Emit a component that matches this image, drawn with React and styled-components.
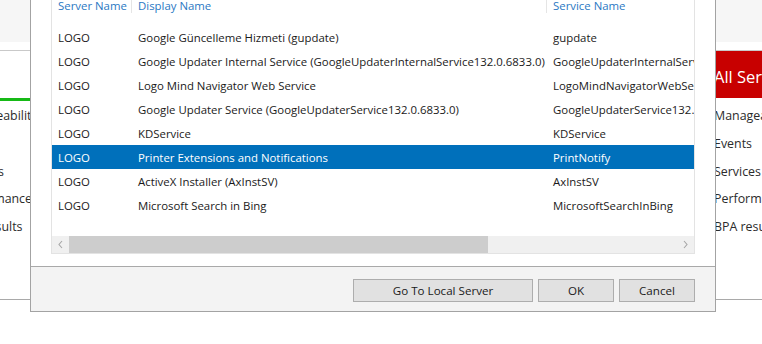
import React from "react";
import styled, { createGlobalStyle } from "styled-components";

const GlobalStyle = createGlobalStyle`
  html, body {
    margin: 0;
    padding: 0;
    background: #ffffff;
    overflow: hidden;
  }
  body {
    font-family: "Segoe UI", "Open Sans", "Noto Sans", sans-serif;
  }
`;

const Page = styled.div`
  position: relative;
  width: 762px;
  height: 344px;
  overflow: hidden;
  background: #ffffff;
`;

const TopStrip = styled.div`
  height: 42px;
  background: #f6f6f6;
`;

const TileRow = styled.div`
  display: flex;
  gap: 437px;
  margin-top: 8px;
  margin-left: -52px;
`;

const Tile = styled.div`
  width: 320px;
  flex-shrink: 0;
  height: 248px;
  border-top: 1px solid #c9c9c9;
  border-bottom: 1px solid #a9a9a9;
  background: #ffffff;
  display: flex;
  flex-direction: column;
`;

const TileHeader = styled.div`
  height: ${(p) => (p.$danger ? "47px" : "48px")};
  flex-shrink: 0;
  background: ${(p) => (p.$danger ? "#c80000" : "#ffffff")};
  border-bottom: 3px solid ${(p) => (p.$danger ? "#ffffff" : "#16b916")};
  color: #ffffff;
  font-size: 16.5px;
  display: flex;
  align-items: center;
  padding: 3px 0 0 9px;
  box-sizing: border-box;
  height: 50px;
`;

const TileItems = styled.div`
  display: flex;
  flex-direction: column;
  padding: 1px 0 0 9px;
`;

const TileItem = styled.div`
  height: 27.8px;
  line-height: 27.8px;
  font-size: 12.4px;
  color: #2b2b2b;
  white-space: nowrap;
`;

const Dialog = styled.div`
  position: absolute;
  left: 30px;
  top: -30px;
  width: 684px;
  border: 1px solid #a3a3a3;
  background: #ffffff;
  display: flex;
  flex-direction: column;
  padding-top: 22px;
  font-size: 11.4px;
`;

const List = styled.div`
  margin: 0 20px;
  height: 260px;
  border: 1px solid #e3e3e3;
  border-top: none;
  display: flex;
  flex-direction: column;
  overflow: hidden;
`;

const HeaderRow = styled.div`
  display: grid;
  grid-template-columns: 80px 415px 1fr;
  height: 24px;
  flex-shrink: 0;
  margin-top: 1px;
  align-items: start;
`;

const HeaderCell = styled.div`
  margin-top: 5px;
  padding-left: 6px;
  color: #2a78c3;
  line-height: 14px;
  height: 14px;
  border-right: ${(p) => (p.$last ? "none" : "1px solid #e5e5e5")};
  white-space: nowrap;
`;

const Rows = styled.div`
  margin-top: 7px;
  flex: 1;
`;

const Row = styled.div`
  display: grid;
  grid-template-columns: 80px 415px 1fr;
  height: 24px;
  align-items: center;
  background: ${(p) => (p.$selected ? "#0070bb" : "transparent")};
  color: ${(p) => (p.$selected ? "#ffffff" : "#1a1a1a")};
`;

const Cell = styled.div`
  padding-left: 6px;
  white-space: nowrap;
  overflow: hidden;
`;

const ScrollBar = styled.div`
  height: 17px;
  flex-shrink: 0;
  display: flex;
  background: #f0f0f0;
`;

const ArrowButton = styled.div`
  width: 17px;
  height: 17px;
  display: flex;
  align-items: center;
  justify-content: center;
  background: #f0f0f0;
`;

const Track = styled.div`
  flex: 1;
  display: flex;
`;

const Thumb = styled.div`
  height: 17px;
  background: #cdcdcd;
`;

const Footer = styled.div`
  margin-top: 12px;
  border-top: 1px solid #a9a9a9;
  background: #f3f3f3;
  display: flex;
  justify-content: flex-end;
  align-items: flex-start;
  gap: 5px;
  padding: 12px 20px 0 0;
  box-sizing: border-box;
  height: 45px;
`;

const Button = styled.button`
  width: ${(p) => p.$w}px;
  height: 23px;
  border: 1px solid #adadad;
  background: #e1e1e1;
  font-family: inherit;
  font-size: 11.6px;
  color: #1a1a1a;
  padding: 0;
`;

const Chevron = ({ dir }) => (
  <svg width="7" height="9" viewBox="0 0 7 9">
    <polyline
      points={dir === "left" ? "5,1 2,4.5 5,8" : "2,1 5,4.5 2,8"}
      fill="none"
      stroke="#a6a6a6"
      strokeWidth="1.1"
    />
  </svg>
);

const services = [
  ["Google Güncelleme Hizmeti (gupdate)", "gupdate"],
  [
    "Google Updater Internal Service (GoogleUpdaterInternalService132.0.6833.0)",
    "GoogleUpdaterInternalService132.0.6833.0",
  ],
  ["Logo Mind Navigator Web Service", "LogoMindNavigatorWebService"],
  [
    "Google Updater Service (GoogleUpdaterService132.0.6833.0)",
    "GoogleUpdaterService132.0.6833.0",
  ],
  ["KDService", "KDService"],
  ["Printer Extensions and Notifications", "PrintNotify"],
  ["ActiveX Installer (AxInstSV)", "AxInstSV"],
  ["Microsoft Search in Bing", "MicrosoftSearchInBing"],
];

const tileItems = ["Manageability", "Events", "Services", "Performance", "BPA results"];

export default function App() {
  return (
    <Page>
      <GlobalStyle />
      <TopStrip />
      <TileRow>
        <Tile>
          <TileHeader />
          <TileItems>
            {tileItems.map((t) => (
              <TileItem key={t}>{t}</TileItem>
            ))}
          </TileItems>
        </Tile>
        <Tile>
          <TileHeader $danger>All Servers</TileHeader>
          <TileItems>
            {tileItems.map((t) => (
              <TileItem key={t}>{t}</TileItem>
            ))}
          </TileItems>
        </Tile>
      </TileRow>

      <Dialog>
        <List>
          <HeaderRow>
            <HeaderCell>Server Name</HeaderCell>
            <HeaderCell>Display Name</HeaderCell>
            <HeaderCell $last>Service Name</HeaderCell>
          </HeaderRow>
          <Rows>
            {services.map(([display, name]) => (
              <Row key={name} $selected={name === "PrintNotify"}>
                <Cell>LOGO</Cell>
                <Cell>{display}</Cell>
                <Cell>{name}</Cell>
              </Row>
            ))}
          </Rows>
          <ScrollBar>
            <ArrowButton>
              <Chevron dir="left" />
            </ArrowButton>
            <Track>
              <Thumb style={{ width: "419px" }} />
            </Track>
            <ArrowButton>
              <Chevron dir="right" />
            </ArrowButton>
          </ScrollBar>
        </List>
        <Footer>
          <Button $w={180}>Go To Local Server</Button>
          <Button $w={76}>OK</Button>
          <Button $w={76}>Cancel</Button>
        </Footer>
      </Dialog>
    </Page>
  );
}
